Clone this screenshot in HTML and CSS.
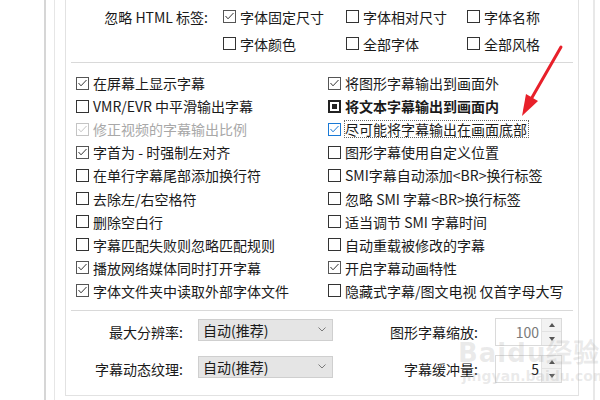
FILE: index.html
```html
<!DOCTYPE html>
<html lang="zh-CN">
<head>
<meta charset="utf-8">
<title>字幕设置</title>
<link rel="stylesheet" href="styles.css">
</head>
<body>
<div class="window">
  <div class="inner">
    <div class="group">
      <div class="tags">
        <div class="label">忽略 HTML 标签:</div>
        <label class="cb"><span class="box checked"><svg viewBox="0 0 11 11"><polyline points="1.5,5 4,7.8 9.5,2"/></svg></span>字体固定尺寸</label>
        <label class="cb"><span class="box"></span>字体相对尺寸</label>
        <label class="cb"><span class="box"></span>字体名称</label>
        <div></div>
        <label class="cb"><span class="box"></span>字体颜色</label>
        <label class="cb"><span class="box"></span>全部字体</label>
        <label class="cb"><span class="box"></span>全部风格</label>
      </div>
      <div class="sep"></div>
      <div class="opts">
        <div class="col">
          <label class="cb"><span class="box checked"><svg viewBox="0 0 11 11"><polyline points="1.5,5 4,7.8 9.5,2"/></svg></span>在屏幕上显示字幕</label>
          <label class="cb"><span class="box"></span>VMR/EVR 中平滑输出字幕</label>
          <label class="cb disabled"><span class="box checked"><svg viewBox="0 0 11 11"><polyline points="1.5,5 4,7.8 9.5,2"/></svg></span>修正视频的字幕输出比例</label>
          <label class="cb"><span class="box checked"><svg viewBox="0 0 11 11"><polyline points="1.5,5 4,7.8 9.5,2"/></svg></span>字首为 - 时强制左对齐</label>
          <label class="cb"><span class="box"></span>在单行字幕尾部添加换行符</label>
          <label class="cb"><span class="box"></span>去除左/右空格符</label>
          <label class="cb"><span class="box"></span>删除空白行</label>
          <label class="cb"><span class="box"></span>字幕匹配失败则忽略匹配规则</label>
          <label class="cb"><span class="box checked"><svg viewBox="0 0 11 11"><polyline points="1.5,5 4,7.8 9.5,2"/></svg></span>播放网络媒体同时打开字幕</label>
          <label class="cb"><span class="box checked"><svg viewBox="0 0 11 11"><polyline points="1.5,5 4,7.8 9.5,2"/></svg></span>字体文件夹中读取外部字体文件</label>
        </div>
        <div class="col">
          <label class="cb"><span class="box checked"><svg viewBox="0 0 11 11"><polyline points="1.5,5 4,7.8 9.5,2"/></svg></span>将图形字幕输出到画面外</label>
          <label class="cb bold"><span class="box mixed"><span class="dot"></span></span>将文本字幕输出到画面内</label>
          <label class="cb focus"><span class="box checked blue"><svg viewBox="0 0 11 11"><polyline points="1.5,5 4,7.8 9.5,2"/></svg></span><span class="ring">尽可能将字幕输出在画面底部</span></label>
          <label class="cb"><span class="box"></span>图形字幕使用自定义位置</label>
          <label class="cb"><span class="box"></span>SMI字幕自动添加&lt;BR&gt;换行标签</label>
          <label class="cb"><span class="box"></span>忽略 SMI 字幕&lt;BR&gt;换行标签</label>
          <label class="cb"><span class="box"></span>适当调节 SMI 字幕时间</label>
          <label class="cb"><span class="box"></span>自动重载被修改的字幕</label>
          <label class="cb"><span class="box checked"><svg viewBox="0 0 11 11"><polyline points="1.5,5 4,7.8 9.5,2"/></svg></span>开启字幕动画特性</label>
          <label class="cb"><span class="box"></span>隐藏式字幕/图文电视 仅首字母大写</label>
        </div>
      </div>
      <div class="sep"></div>
      <div class="bottom">
        <div class="blabel">最大分辨率:</div>
        <div class="select">自动(推荐)<svg class="chev" viewBox="0 0 8 5"><polyline points="0.5,0.5 4,4 7.5,0.5"/></svg></div>
        <div class="blabel right">图形字幕缩放:</div>
        <div class="spin"><span class="val grey">100</span><span class="btns"><span class="up"><svg viewBox="0 0 6 4"><polygon points="0,4 3,0 6,4"/></svg></span><span class="down"><svg viewBox="0 0 6 4"><polygon points="0,0 6,0 3,4"/></svg></span></span></div>
        <div class="blabel">字幕动态纹理:</div>
        <div class="select">自动(推荐)<svg class="chev" viewBox="0 0 8 5"><polyline points="0.5,0.5 4,4 7.5,0.5"/></svg></div>
        <div class="blabel right">字幕缓冲量:</div>
        <div class="spin"><span class="val">5</span><span class="btns"><span class="up"><svg viewBox="0 0 6 4"><polygon points="0,4 3,0 6,4"/></svg></span><span class="down"><svg viewBox="0 0 6 4"><polygon points="0,0 6,0 3,4"/></svg></span></span></div>
      </div>
    </div>
  </div>
</div>
<div class="watermark"><span class="wm1">Baidu经验</span><span class="wm2">jingyan.baidu.com</span></div>
<svg class="arrow" width="600" height="400" viewBox="0 0 600 400">
  <line x1="561" y1="47" x2="530" y2="101" stroke="#e8202a" stroke-width="3" stroke-linecap="round"/>
  <polygon points="522,116 538,101 526,94" fill="#e8202a"/>
</svg>
</body>
</html>
```
FILE: styles.css
```css
html, body {
  margin: 0;
  padding: 0;
  background: #ffffff;
}
body {
  width: 600px;
  height: 400px;
  overflow: hidden;
  position: relative;
  font-family: "Noto Sans CJK SC", "Noto Sans", sans-serif;
  font-size: 14px;
  color: #1a1a1a;
}
.window {
  margin-left: 44px;
  border-left: 2px solid #d6d6d6;
  padding-left: 8px;
  height: 400px;
  box-sizing: border-box;
}
.inner {
  width: 541px;
  box-sizing: border-box;
  border-left: 1px solid #e6e6e6;
  border-right: 2px solid #e8e8e8;
  padding: 0 14px 0 10px;
  height: 400px;
}
.group {
  border: 1px solid #e2e2e2;
  border-top: none;
  height: 396px;
  box-sizing: border-box;
}
.tags {
  display: grid;
  grid-template-columns: 157px 123px 121px 1fr;
  grid-auto-rows: 27px;
  padding-top: 3px;
  align-items: center;
}
.label {
  text-align: right;
  padding-right: 15px;
  line-height: 20px;
}
.cb {
  display: flex;
  align-items: center;
  white-space: nowrap;
  line-height: 20px;
}
.box {
  width: 13px;
  height: 13px;
  box-sizing: border-box;
  border: 1px solid #333;
  margin-right: 4px;
  flex: none;
  display: flex;
  align-items: center;
  justify-content: center;
  background: #fff;
}
.box svg {
  width: 11px;
  height: 11px;
  fill: none;
  stroke: #333;
  stroke-width: 1;
}
.box.checked {
  border-color: #555;
}
.box.blue {
  border-color: #1979d6;
}
.box.blue svg {
  stroke: #1979d6;
}
.box.mixed {
  border: 2px solid #222;
}
.box.mixed .dot {
  width: 5px;
  height: 5px;
  background: #222;
}
.bold {
  font-weight: bold;
}
.disabled {
  color: #a8a8a8;
}
.disabled .box {
  border-color: #c4c4c4;
}
.disabled .box svg {
  stroke: #c4c4c4;
}
.ring {
  border: 1px dotted #666;
  line-height: 16px;
  padding: 0 1px 0 0;
  margin-left: -1px;
}
.sep {
  height: 1px;
  background: #d9d9d9;
  margin: 5px 5px 0 5px;
}
.opts {
  display: grid;
  grid-template-columns: 252px 1fr;
  padding: 8.5px 0 7.5px 10px;
}
.col {
  display: grid;
  grid-auto-rows: 23.1px;
  align-items: center;
}
.opts + .sep {
  margin-top: 0;
}
.bottom {
  display: grid;
  grid-template-columns: 132px 135px 162px 67px;
  grid-auto-rows: 28px;
  row-gap: 9px;
  padding-top: 7px;
  align-items: center;
}
.blabel {
  text-align: right;
  padding-right: 15px;
  line-height: 20px;
}
.blabel.right {
  padding-right: 17px;
}
.select {
  height: 22px;
  box-sizing: border-box;
  background: #e5e5e5;
  border: 1px solid #cfcfcf;
  display: flex;
  align-items: center;
  padding-left: 4px;
  line-height: 20px;
  align-self: start;
  margin-top: 1px;
  position: relative;
}
.chev {
  width: 8px;
  height: 5px;
  fill: none;
  stroke: #7a7a7a;
  stroke-width: 1;
  margin-left: auto;
  margin-right: 6px;
}
.spin {
  height: 28px;
  box-sizing: border-box;
  border: 1px solid #dadada;
  display: flex;
  background: #fff;
}
.val {
  flex: 1;
  text-align: right;
  padding-right: 2px;
  line-height: 26px;
  color: #222;
}
.val.grey {
  color: #7a7a7a;
}
.btns {
  width: 19px;
  display: flex;
  flex-direction: column;
  border-left: 1px solid #e2e2e2;
  background: #f2f2f2;
}
.btns span {
  flex: 1;
  display: flex;
  align-items: center;
  justify-content: center;
}
.btns .up {
  border-bottom: 1px solid #e2e2e2;
}
.btns svg {
  width: 6px;
  height: 4px;
  fill: #555;
}
.watermark {
  position: absolute;
  left: 458px;
  top: 338px;
  display: flex;
  flex-direction: column;
  pointer-events: none;
  color: rgba(160, 160, 160, 0.22);
  font-family: "DejaVu Sans", sans-serif;
  font-weight: bold;
}
.wm1 {
  font-size: 26px;
  line-height: 30px;
  letter-spacing: 1px;
}
.wm2 {
  font-size: 14px;
  line-height: 16px;
  margin-left: 4px;
}
.arrow {
  position: absolute;
  left: 0;
  top: 0;
  pointer-events: none;
}
```
